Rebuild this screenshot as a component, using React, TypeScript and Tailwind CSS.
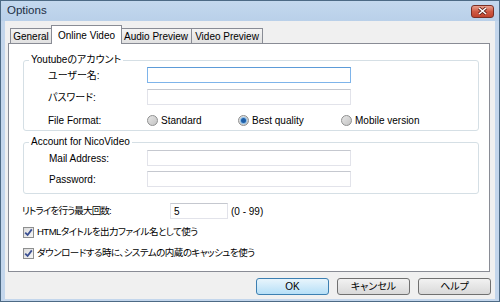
import React from "react";

const font =
  "font-['Liberation_Sans','Noto_Sans_CJK_JP',sans-serif] [font-feature-settings:'palt']";

function TextBox({ value = "", active = false, width = "w-[204px]" }: { value?: string; active?: boolean; width?: string }) {
  return (
    <div
      className={`${width} h-[16px] bg-white border flex items-center pl-[3px] text-[10px] ${
        active
          ? "border-[#7eb4ea] border-t-[#5c9bd8]"
          : "border-[#e2e3ea] border-t-[#c5c8cf]"
      }`}
    >
      {value}
    </div>
  );
}

function Radio({ checked = false }: { checked?: boolean }) {
  return (
    <span className="w-[11px] h-[11px] rounded-full border border-[#8e8f8f] bg-gradient-to-br from-[#e6e6e6] to-[#c4c4c4] flex items-center justify-center shrink-0">
      {checked && (
        <span className="w-[5px] h-[5px] rounded-full bg-[#1f5fa8] shadow-[0_0_0_1px_#8fc0ea]" />
      )}
    </span>
  );
}

function Checkbox() {
  return (
    <span className="w-[11px] h-[11px] border border-[#8e8f8f] bg-gradient-to-br from-[#dcdcdc] to-[#f6f6f6] flex items-center justify-center shrink-0">
      <svg width="9" height="9" viewBox="0 0 9 9">
        <path d="M1.2 4.6 L3.6 7 L7.8 1.4" fill="none" stroke="#3a4f92" strokeWidth="1.8" />
      </svg>
    </span>
  );
}

function Tab({ label, width, selected = false }: { label: string; width: string; selected?: boolean }) {
  return (
    <div
      className={`${width} flex items-center justify-center border border-[#898c95] text-[10px] ${
        selected
          ? "h-[19px] bg-white border-b-0 relative z-10 -mx-[1px]"
          : "h-[16px] bg-gradient-to-b from-[#f4f4f4] to-[#e1e1e1] -ml-[1px] first:ml-0"
      }`}
    >
      {label}
    </div>
  );
}

function Button({ label, primary = false }: { label: string; primary?: boolean }) {
  return (
    <div
      className={`w-[73px] h-[17px] rounded-[3px] border flex items-center justify-center text-[10px] ${
        primary
          ? "border-[#3c7fb1] bg-gradient-to-b from-[#e8f5fc] to-[#b6dff7]"
          : "border-[#707070] bg-gradient-to-b from-[#f2f2f2] to-[#d9d9d9]"
      }`}
    >
      {label}
    </div>
  );
}

export default function App() {
  return (
    <div className={`w-[500px] h-[302px] border border-[#4d6a85] bg-[#c3d6ec] px-[4px] pb-[2px] flex flex-col text-black ${font}`}>
      {/* title bar */}
      <div className="h-[20px] flex items-center justify-between bg-gradient-to-b from-[#c4d8ee] to-[#b9d0e9] -mx-[4px] pl-[6px] pr-[5px]">
        <span className="text-[11.5px] text-[#1c2e44]">Options</span>
        <div className="w-[23px] h-[13px] rounded-[3px] border border-[#7a2f25] bg-gradient-to-b from-[#e8a08e] via-[#cf5a44] to-[#c0432d] flex items-center justify-center">
          <svg width="9" height="8" viewBox="0 0 9 8">
            <path d="M1 1 L8 7 M8 1 L1 7" stroke="#5a1d16" strokeWidth="3" />
            <path d="M1 1 L8 7 M8 1 L1 7" stroke="#ffffff" strokeWidth="1.6" />
          </svg>
        </div>
      </div>

      {/* client area */}
      <div className="flex-1 bg-[#f0f0f0] flex flex-col pl-[3px] pr-[5px]">
        <div className="mt-[4px] ml-[2px] flex items-end">
          <Tab label="General" width="w-[42px]" />
          <Tab label="Online Video" width="w-[71px]" selected />
          <Tab label="Audio Preview" width="w-[72px]" />
          <Tab label="Video Preview" width="w-[72px]" />
        </div>

        <div className="h-[229px] -mt-[1px] border border-[#898c95] bg-white flex flex-col text-[10px]">
          <fieldset className="mt-[11px] ml-[14px] mr-[10px] border border-[#d5dfe5] rounded-[3px] p-0">
            <legend className="ml-[5px] px-[2px] leading-[10px]">Youtubeのアカウント</legend>
            <div className="pl-[24px]">
              <div className="h-[20px] flex items-center">
                <span className="w-[99px]">ユーザー名:</span>
                <TextBox active />
              </div>
              <div className="h-[20px] mt-[2px] flex items-center">
                <span className="w-[99px]">パスワード:</span>
                <TextBox />
              </div>
              <div className="h-[20px] mt-[3px] flex items-center">
                <span className="w-[99px]">File Format:</span>
                <div className="w-[91px] flex items-center gap-[3px]">
                  <Radio />
                  <span>Standard</span>
                </div>
                <div className="w-[103px] flex items-center gap-[3px]">
                  <Radio checked />
                  <span>Best quality</span>
                </div>
                <div className="flex items-center gap-[3px]">
                  <Radio />
                  <span>Mobile version</span>
                </div>
              </div>
            </div>
          </fieldset>

          <fieldset className="mt-[6px] ml-[14px] mr-[10px] border border-[#d5dfe5] rounded-[3px] p-0 pb-[4px]">
            <legend className="ml-[5px] px-[2px] leading-[10px]">Account for NicoVideo</legend>
            <div className="pl-[25px]">
              <div className="h-[20px] mt-[1px] flex items-center">
                <span className="w-[98px]">Mail Address:</span>
                <TextBox />
              </div>
              <div className="h-[20px] mt-[1px] flex items-center">
                <span className="w-[98px]">Password:</span>
                <TextBox />
              </div>
            </div>
          </fieldset>

          <div className="h-[20px] mt-[7px] ml-[13px] flex items-center">
            <span className="w-[148px] text-[9.5px] tracking-[-0.8px]">リトライを行う最大回数:</span>
            <TextBox value="5" width="w-[58px]" />
            <span className="ml-[3px]">(0 - 99)</span>
          </div>
          <div className="h-[20px] mt-[1px] ml-[14px] flex items-center gap-[3px]">
            <Checkbox />
            <span className="text-[9.5px] tracking-[-0.5px]">HTMLタイトルを出力ファイル名として使う</span>
          </div>
          <div className="h-[20px] mt-[1px] ml-[14px] flex items-center gap-[3px]">
            <Checkbox />
            <span className="text-[9.5px] tracking-[-0.5px]">ダウンロードする時に、システムの内蔵のキャッシュを使う</span>
          </div>
        </div>

        <div className="mt-[6px] -mr-[1px] flex justify-end gap-[8px]">
          <Button label="OK" primary />
          <Button label="キャンセル" />
          <Button label="ヘルプ" />
        </div>
      </div>
    </div>
  );
}
